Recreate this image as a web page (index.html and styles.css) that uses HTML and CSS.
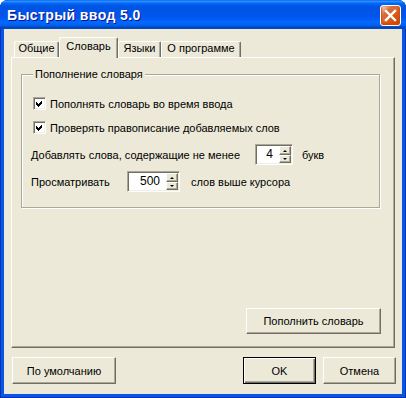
FILE: index.html
```html
<!DOCTYPE html>
<html lang="ru">

<head>
	<meta charset="utf-8">
	<title>Быстрый ввод 5.0</title>
	<link rel="stylesheet" href="styles.css">
</head>

<body>

	<div class="window">

		<div class="titlebar">
			<span class="title">Быстрый ввод 5.0</span>
			<button class="close-btn">
				<svg width="19" height="19" viewBox="0 0 19 19">
					<path d="M5 5 L14 14 M14 5 L5 14" stroke="#fff" stroke-width="2.4" stroke-linecap="square" />
				</svg>
			</button>
		</div>

		<div class="client">

			<!-- tabs -->
			<div class="tabs">
				<div class="tab tab-general">Общие</div>
				<div class="tab tab-active tab-dict">Словарь</div>
				<div class="tab tab-lang">Языки</div>
				<div class="tab tab-about">О программе</div>
			</div>

			<div class="panel">

				<div class="group">
					<span class="group-title">Пополнение словаря</span>

					<label class="check-row">
						<span class="checkbox">
							<svg width="11" height="11" viewBox="0 0 11 11">
								<path d="M2 4 L4 6 L8 2 L8 5 L4 9 L2 7 Z" fill="#000" />
							</svg>
						</span>
						Пополнять словарь во время ввода
					</label>

					<label class="check-row check-row-2">
						<span class="checkbox">
							<svg width="11" height="11" viewBox="0 0 11 11">
								<path d="M2 4 L4 6 L8 2 L8 5 L4 9 L2 7 Z" fill="#000" />
							</svg>
						</span>
						Проверять правописание добавляемых слов
					</label>

					<div class="spin-row spin-row-min">
						<span class="spin-label label-min">Добавлять слова, содержащие не менее</span>
						<span class="spin spin-small">
							<span class="spin-value">4</span>
							<span class="spin-btns">
								<span class="spin-btn"><span class="arrow-up"></span></span>
								<span class="spin-btn spin-btn-down"><span class="arrow-down"></span></span>
							</span>
						</span>
						<span class="unit unit-min">букв</span>
					</div>

					<div class="spin-row spin-row-view">
						<span class="spin-label label-view">Просматривать</span>
						<span class="spin spin-wide">
							<span class="spin-value">500</span>
							<span class="spin-btns">
								<span class="spin-btn"><span class="arrow-up"></span></span>
								<span class="spin-btn spin-btn-down"><span class="arrow-down"></span></span>
							</span>
						</span>
						<span class="unit unit-view">слов выше курсора</span>
					</div>
				</div>

				<button class="btn btn-fill">Пополнить словарь</button>
			</div>

			<div class="button-row">
				<button class="btn btn-defaults">По умолчанию</button>
				<span class="spacer"></span>
				<button class="btn btn-ok">OK</button>
				<button class="btn btn-cancel">Отмена</button>
			</div>

		</div>
	</div>

</body>

</html>
```

FILE: styles.css
```css
body {
	margin: 0;
	padding: 0;
	background-color: #fff;
	font-family: "Liberation Sans", Arial, sans-serif;
	font-size: 11px;
	color: #000;
}

/* window frame */
.window {
	width: 406px;
	height: 398px;
	display: flex;
	flex-direction: column;
	background-color: #0A56E4;
	border-radius: 8px 8px 0 0;
	overflow: hidden;
	box-shadow: inset 1px 0 #0032B6, inset -1px 0 #0032B6, inset 0 -1px #0032B6;
}

.titlebar {
	height: 29px;
	flex-shrink: 0;
	display: flex;
	align-items: center;
	justify-content: space-between;
	padding: 0 5px 0 7px;
	box-sizing: border-box;
	background: linear-gradient(to bottom, #0058EE 0%, #3593FF 4%, #288EFF 6%, #127DFF 8%, #036FFC 10%, #0262EE 14%, #0057E5 20%, #0054E3 24%, #0055EB 56%, #005BF5 66%, #026AFE 76%, #0062EF 86%, #0052D6 92%, #0040AB 96%, #0A4ED4 100%);
}

.title {
	color: #fff;
	font-weight: bold;
	font-size: 14px;
	letter-spacing: 0.4px;
	text-shadow: 1px 1px #0F1089;
	margin-top: 1px;
}

.close-btn {
	width: 21px;
	height: 21px;
	padding: 0;
	margin-top: 1px;
	border: 1px solid #fff;
	border-radius: 3px;
	background: radial-gradient(circle at 90% 90%, #cc4600 0%, #dc6527 55%, #cd7546 70%, #ffccb2 90%, #fff 100%);
	box-shadow: inset 0 -1px 2px 1px #da4600;
	display: flex;
	align-items: center;
	justify-content: center;
}

.client {
	flex: 1;
	margin: 0 4px 4px 4px;
	padding: 8px 7px 10px 7px;
	background-color: #ECE9D8;
	display: flex;
	flex-direction: column;
}

/* tabs */
.tabs {
	height: 20px;
	display: flex;
	align-items: flex-end;
	padding-left: 3px;
}

.tab {
	box-sizing: border-box;
	height: 16px;
	line-height: 13px;
	text-align: center;
	white-space: nowrap;
	border-top: 1px solid #fff;
	border-left: 1px solid #fff;
	border-right: 1px solid #716F64;
	box-shadow: inset -1px 0 #ACA899;
	border-radius: 2px 2px 0 0;
	background-color: #ECE9D8;
}

.tab-general { width: 45px; }
.tab-dict { width: 59px; }
.tab-lang { width: 43px; }
.tab-about { width: 80px; }

.tab-active {
	height: 21px;
	line-height: 16px;
	margin-bottom: -1px;
	position: relative;
	z-index: 1;
}

.panel {
	height: 291px;
	box-sizing: border-box;
	border: 1px solid;
	border-color: #fff #716F64 #716F64 #fff;
	box-shadow: inset -1px -1px #ACA899;
	padding: 16px 14px 0 9px;
	display: flex;
	flex-direction: column;
}

/* group box */
.group {
	position: relative;
	border: 1px solid #ACA899;
	box-shadow: inset 1px 1px #fff, 1px 1px #fff;
	padding: 22px 10px 15px 9px;
}

.group-title {
	position: absolute;
	top: -8px;
	left: 11px;
	padding: 0 2px;
	line-height: 14px;
	background-color: #ECE9D8;
}

.check-row {
	display: flex;
	align-items: center;
	height: 13px;
	margin-left: 2px;
	gap: 4px;
	white-space: nowrap;
}

.check-row-2 {
	margin-top: 11px;
}

.checkbox {
	width: 13px;
	height: 13px;
	flex-shrink: 0;
	box-sizing: border-box;
	border: 1px solid;
	border-color: #ACA899 #fff #fff #ACA899;
	box-shadow: inset 1px 1px #716F64, inset -1px -1px #F1EFE2;
	background-color: #fff;
	display: flex;
}

.checkbox svg {
	display: block;
	shape-rendering: crispEdges;
}

.spin-row {
	display: flex;
	align-items: center;
	height: 21px;
	white-space: nowrap;
}

.spin-row-min { margin-top: 10px; }
.spin-row-view { margin-top: 6px; }

.spin-label {
	flex-shrink: 0;
}

.label-min { width: 224px; }
.label-view { width: 96px; }

.spin {
	display: flex;
	flex-shrink: 0;
	box-sizing: border-box;
	height: 21px;
	border: 1px solid;
	border-color: #ACA899 #fff #fff #ACA899;
	box-shadow: inset 1px 1px #716F64, inset -1px -1px #F1EFE2;
	background-color: #fff;
	padding: 1px;
}

.spin-small { width: 38px; }
.spin-wide { width: 53px; }

.spin-value {
	flex: 1;
	text-align: right;
	padding-right: 6px;
	line-height: 17px;
	font-size: 12px;
}

.spin-btns {
	width: 12px;
	display: flex;
	flex-direction: column;
}

.spin-btn {
	height: 9px;
	box-sizing: border-box;
	background-color: #ECE9D8;
	border: 1px solid;
	border-color: #fff #716F64 #716F64 #fff;
	box-shadow: inset -1px -1px #ACA899;
	display: flex;
	align-items: center;
	justify-content: center;
}

.spin-btn-down {
	height: 8px;
}

.arrow-up {
	width: 0;
	height: 0;
	border-left: 2px solid transparent;
	border-right: 2px solid transparent;
	border-bottom: 2px solid #000;
}

.arrow-down {
	width: 0;
	height: 0;
	border-left: 2px solid transparent;
	border-right: 2px solid transparent;
	border-top: 2px solid #000;
}

.unit-min { margin-left: 9px; }
.unit-view { margin-left: 11px; }

/* buttons */
.btn {
	font-family: inherit;
	font-size: 11px;
	color: #000;
	box-sizing: border-box;
	background-color: #ECE9D8;
	border: 1px solid;
	border-color: #fff #716F64 #716F64 #fff;
	box-shadow: inset -1px -1px #ACA899;
	padding: 0;
}

.btn-fill {
	align-self: flex-end;
	margin-top: auto;
	margin-bottom: 13px;
	margin-right: -1px;
	width: 135px;
	height: 26px;
}

.button-row {
	display: flex;
	height: 27px;
	margin-top: 9px;
	margin-left: 1px;
	margin-right: -1px;
	gap: 7px;
}

.button-row .btn {
	height: 27px;
}

.spacer {
	flex: 1;
}

.btn-defaults { width: 104px; }
.btn-ok { width: 73px; }
.btn-cancel { width: 73px; }

.btn-ok {
	border: 1px solid #000;
	box-shadow: inset 1px 1px #fff, inset -1px -1px #716F64, inset -2px -2px #ACA899;
}
```
